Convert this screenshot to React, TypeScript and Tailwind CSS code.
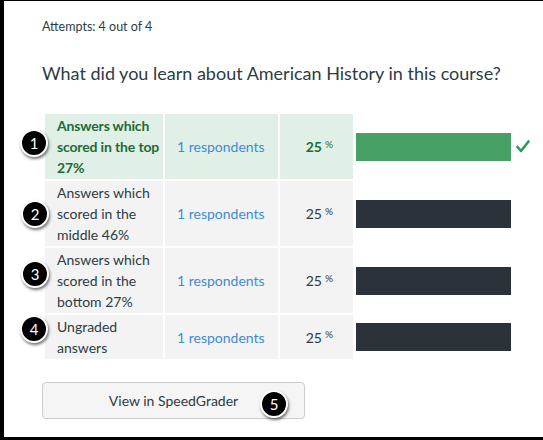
import React from 'react';

interface Row {
  label: string;
  respondents: string;
  percent: number;
  correct?: boolean;
  height: string;
}

const rows: Row[] = [
  { label: 'Answers which scored in the top 27%', respondents: '1 respondents', percent: 25, correct: true, height: 'h-[65px]' },
  { label: 'Answers which scored in the middle 46%', respondents: '1 respondents', percent: 25, height: 'h-[65px]' },
  { label: 'Answers which scored in the bottom 27%', respondents: '1 respondents', percent: 25, height: 'h-[65px]' },
  { label: 'Ungraded answers', respondents: '1 respondents', percent: 25, height: 'h-[44px]' },
];

const Badge: React.FC<{ n: number; className: string }> = ({ n, className }) => (
  <div
    className={`absolute w-[28px] h-[28px] rounded-full bg-black border-2 border-white text-white text-[15px] flex items-center justify-center shadow-[1px_2px_3px_rgba(0,0,0,0.55)] ${className}`}
  >
    {n}
  </div>
);

const App: React.FC = () => {
  return (
    <div className="relative w-[543px] h-[440px] bg-white border-l-4 border-t border-b-[3px] border-black font-['Lato','Liberation_Sans',sans-serif] text-[#2d3b45] overflow-hidden">
      <div className="pl-[38px] pt-[18px]">
        <p className="text-[12.5px] leading-[16px]">Attempts: 4 out of 4</p>
        <h2 className="mt-[26px] text-[18px] leading-[24px]">What did you learn about American History in this course?</h2>

        <div className="mt-[29px] ml-[3px] flex flex-col gap-[2px]">
          {rows.map((row, i) => (
            <div key={i} className={`flex gap-[2px] ${row.height}`}>
              <div
                className={`w-[118px] pl-[12px] flex items-center text-[14px] leading-[21px] ${
                  row.correct ? 'bg-[#e1f0e6] text-[#1d6b36] font-bold tracking-[-0.15px]' : 'bg-[#f3f3f3] pr-[2px]'
                }`}
              >
                {row.label}
              </div>
              <div
                className={`w-[113px] pl-[12px] flex items-center text-[14px] text-[#3d8bd9] ${
                  row.correct ? 'bg-[#e1f0e6]' : 'bg-[#f3f3f3]'
                }`}
              >
                {row.respondents}
              </div>
              <div
                className={`w-[73px] pr-[20px] flex items-center justify-end text-[14px] ${
                  row.correct ? 'bg-[#e1f0e6] text-[#1d6b36] font-bold' : 'bg-[#f3f3f3]'
                }`}
              >
                {row.percent}
                <sup className="ml-[3px] text-[10px] font-normal -top-[3px]">%</sup>
              </div>
              <div className="flex items-center pl-px">
                <div className={`w-[155px] h-[28px] ${row.correct ? 'bg-[#47a065]' : 'bg-[#2b323a]'}`} />
                {row.correct && (
                  <svg className="ml-[5px]" width="14" height="13" viewBox="0 0 14 13">
                    <path d="M1.5 7 L5 11 L12.5 1.5" fill="none" stroke="#2e9a5e" strokeWidth="2.6" strokeLinecap="round" strokeLinejoin="round" />
                  </svg>
                )}
              </div>
            </div>
          ))}
        </div>

        <button className="mt-[23px] w-[263px] h-[37px] bg-[#f5f5f5] border border-[#c7cdd1] rounded-[4px] text-[14px] text-[#2d3b45]">
          View in SpeedGrader
        </button>
      </div>

      <Badge n={1} className="left-[16px] top-[128px]" />
      <Badge n={2} className="left-[17px] top-[199px]" />
      <Badge n={3} className="left-[17px] top-[259px]" />
      <Badge n={4} className="left-[16px] top-[314px]" />
      <Badge n={5} className="left-[256px] top-[389px]" />
    </div>
  );
};

export default App;
